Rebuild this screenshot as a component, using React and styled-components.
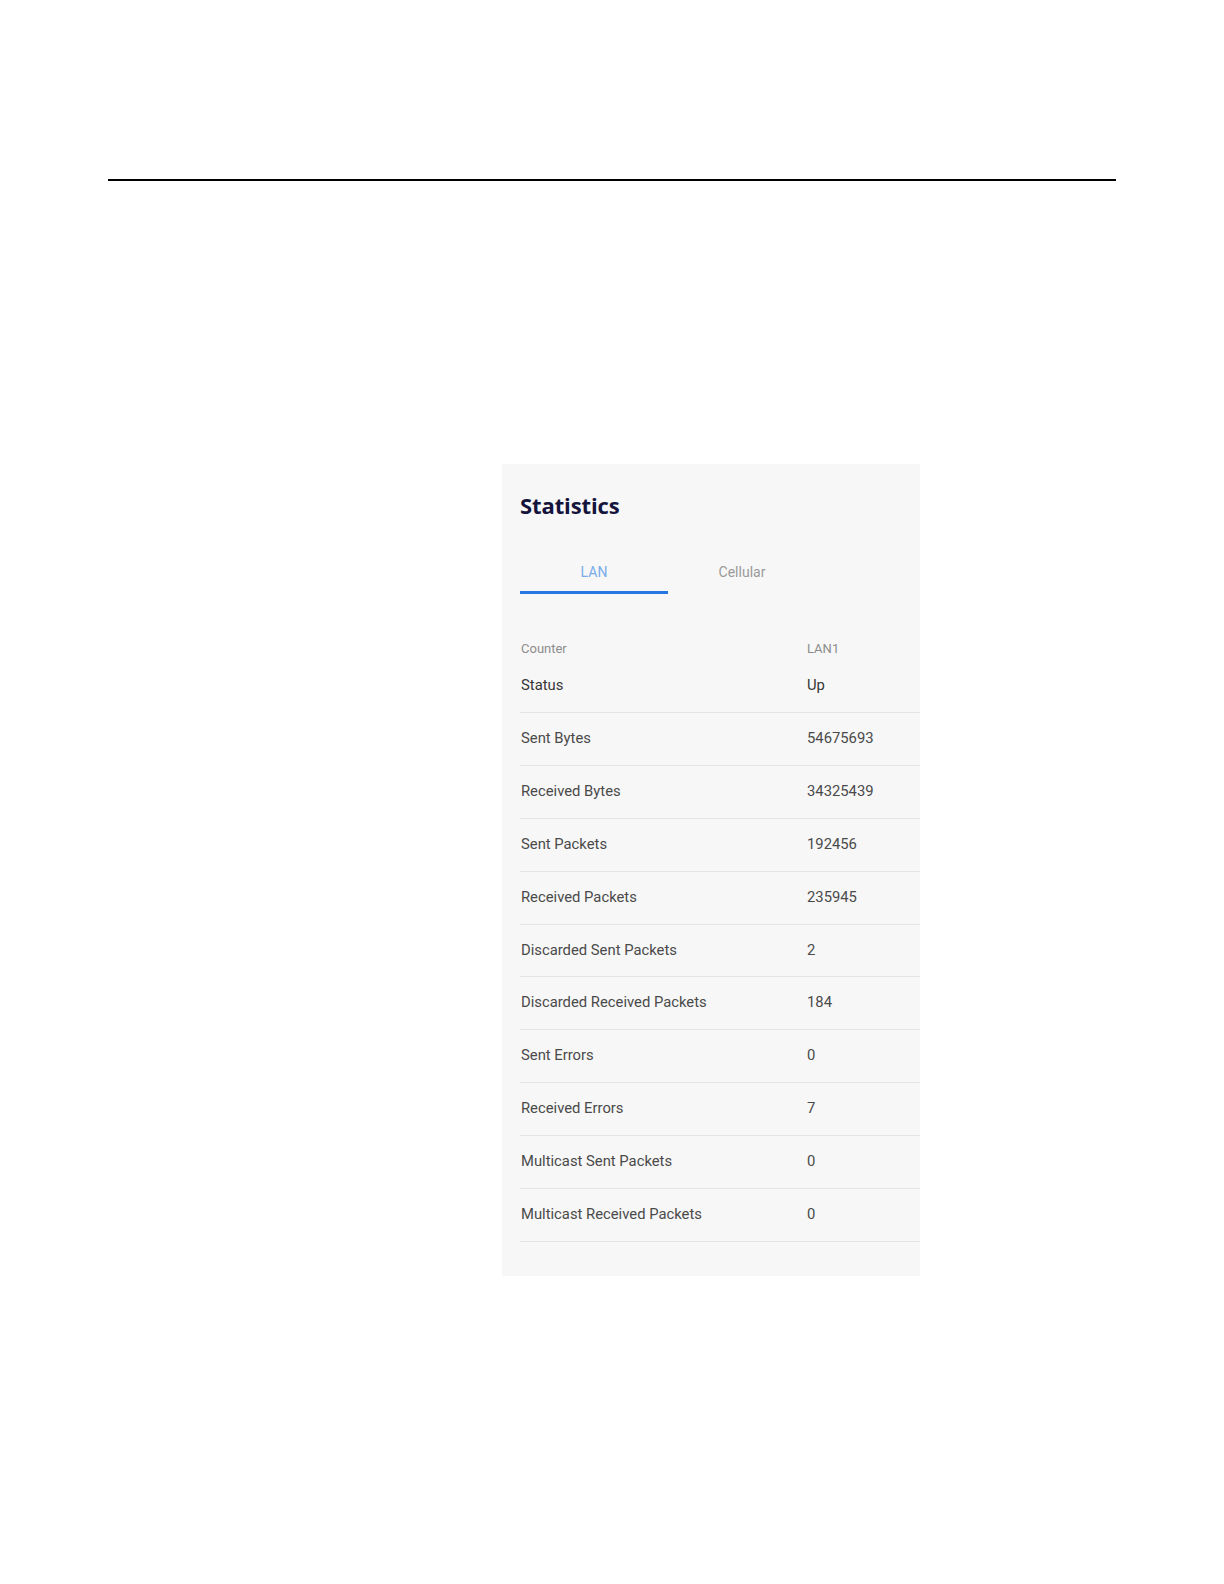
import React from "react";
import styled, { createGlobalStyle } from "styled-components";

const Global = createGlobalStyle`
  html, body { margin: 0; padding: 0; background: #ffffff; }
  body { font-family: Roboto, "Liberation Sans", Arial, sans-serif; }
`;

const Page = styled.div`
  padding: 179px 108px 0;
  min-height: 1584px;
  box-sizing: border-box;
`;

const Rule = styled.div`
  height: 2px;
  background: #000;
`;

const Panel = styled.section`
  margin: 283px 0 0 394px;
  width: 418px;
  background: #f7f7f7;
  padding: 28px 0 34px 18px;
  box-sizing: border-box;
`;

const Title = styled.h2`
  margin: 0;
  font-family: "Open Sans", "Noto Sans", sans-serif;
  font-weight: 700;
  font-size: 22px;
  line-height: 26px;
  color: #14143c;
  letter-spacing: -0.1px;
`;

const Tabs = styled.div`
  display: flex;
  margin-top: 44px;
`;

const Tab = styled.div`
  width: 148px;
  display: flex;
  justify-content: center;
  padding-bottom: 9px;
  border-bottom: 3px solid ${(p) => (p.$active ? "#2677e2" : "transparent")};
  color: ${(p) => (p.$active ? "#78ade9" : "#9a9a9a")};
  font-size: 14px;
  line-height: 20px;
  white-space: nowrap;
`;

const Table = styled.div`
  margin-top: 45px;
  padding-left: 1px;
`;

const HeadRow = styled.div`
  display: grid;
  grid-template-columns: 286px 1fr;
  font-size: 13px;
  line-height: 20px;
  color: #8c8c8c;
`;

const Row = styled.div`
  display: grid;
  grid-template-columns: 286px 1fr;
  font-size: 14.8px;
  line-height: 20px;
  color: ${(p) => (p.$strong ? "#353535" : "#4a4a4a")};
  padding: ${(p) => (p.$first ? "16px 0 17px" : "15px 0 16.9px")};
  margin-left: -1px;
  padding-left: 1px;
  border-bottom: 1px solid #e4e4e4;
`;

const Cell = styled.div`
  white-space: nowrap;
`;

const rows = [
  ["Sent Bytes", "54675693"],
  ["Received Bytes", "34325439"],
  ["Sent Packets", "192456"],
  ["Received Packets", "235945"],
  ["Discarded Sent Packets", "2"],
  ["Discarded Received Packets", "184"],
  ["Sent Errors", "0"],
  ["Received Errors", "7"],
  ["Multicast Sent Packets", "0"],
  ["Multicast Received Packets", "0"],
];

export default function App() {
  return (
    <>
      <Global />
      <Page>
        <Rule />
        <Panel>
          <Title>Statistics</Title>
          <Tabs>
            <Tab $active>LAN</Tab>
            <Tab>Cellular</Tab>
          </Tabs>
          <Table>
            <HeadRow>
              <Cell>Counter</Cell>
              <Cell>LAN1</Cell>
            </HeadRow>
            <Row $first $strong>
              <Cell>Status</Cell>
              <Cell>Up</Cell>
            </Row>
            {rows.map(([label, value]) => (
              <Row key={label}>
                <Cell>{label}</Cell>
                <Cell>{value}</Cell>
              </Row>
            ))}
          </Table>
        </Panel>
      </Page>
    </>
  );
}
